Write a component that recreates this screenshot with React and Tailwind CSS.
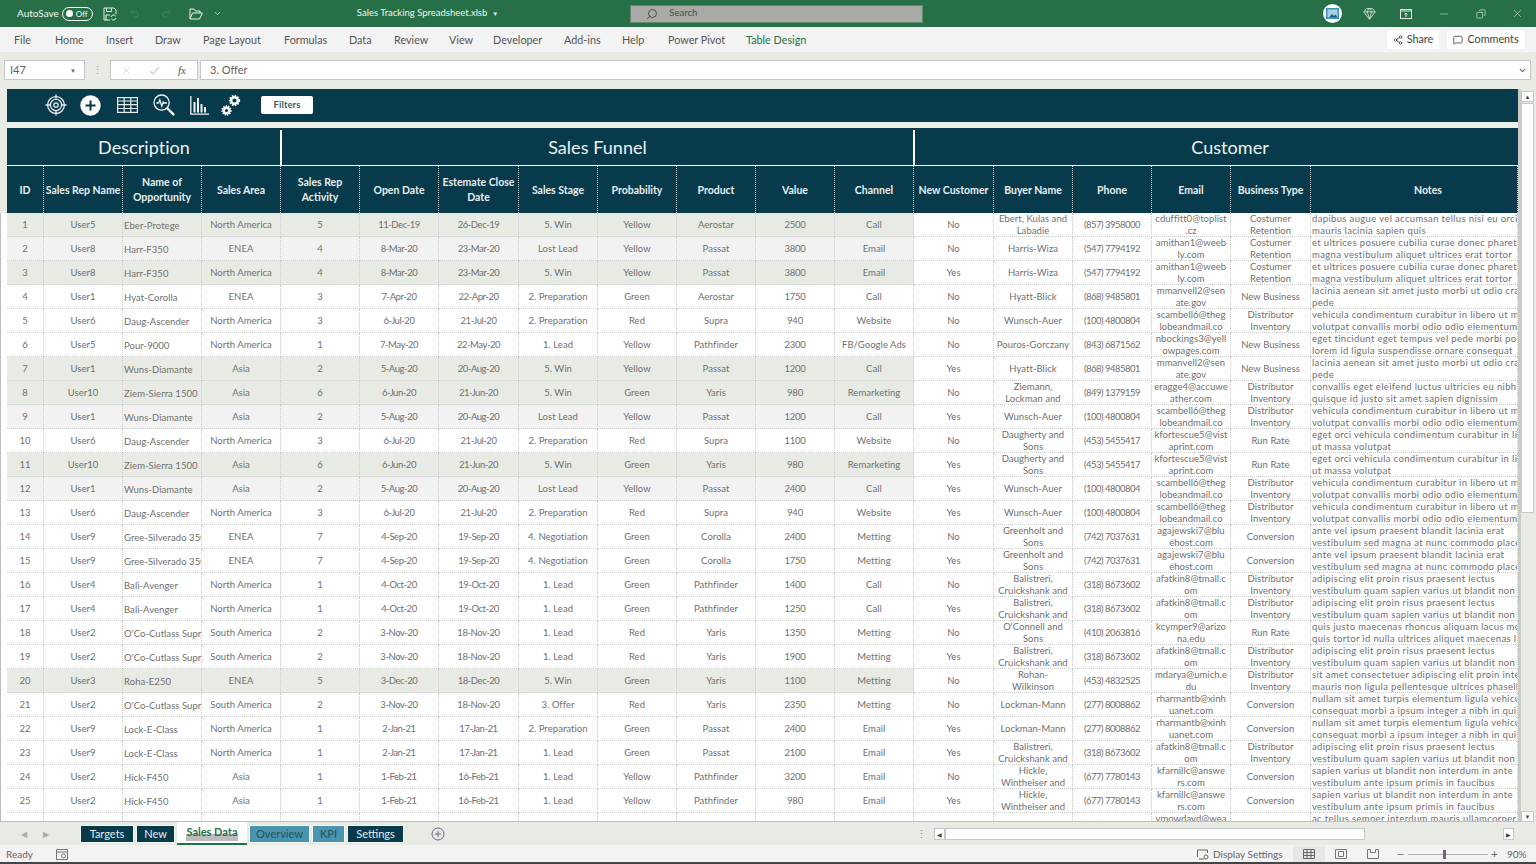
import React from 'react';
import { Search, Gem, Minus, X, Copy, ChevronDown, Share2, MessageSquare, Undo2, Redo2 } from 'lucide-react';

const COLS = 'grid grid-cols-[37px_79px_79px_79px_79px_79px_80px_79px_79px_79px_79px_79px_80px_79px_79px_79px_80px_207px]';

const HEADERS = [
  ['ID'], ['Sales Rep Name'], ['Name of', 'Opportunity'], ['Sales Area'], ['Sales Rep', 'Activity'], ['Open Date'],
  ['Estemate Close', 'Date'], ['Sales Stage'], ['Probability'], ['Product'], ['Value'], ['Channel'], ['New Customer'],
  ['Buyer Name'], ['Phone'], ['Email'], ['Business Type'], ['Notes'],
];

const MENU = [
  ['File', 'w-[41px]'], ['Home', 'w-[51px]'], ['Insert', 'w-[49px]'], ['Draw', 'w-[48px]'], ['Page Layout', 'w-[81px]'],
  ['Formulas', 'w-[65px]'], ['Data', 'w-[45px]'], ['Review', 'w-[55px]'], ['View', 'w-[44px]'], ['Developer', 'w-[71px]'],
  ['Add-ins', 'w-[58px]'], ['Help', 'w-[46px]'], ['Power Pivot', 'w-[78px]'],
];

// customer records, reused by the rows below
const C = {
  ebert: [['Ebert, Kulas and', 'Labadie'], '(857) 3958000', ['cduffitt0@toplist', '.cz'], ['Costumer', 'Retention'], ['dapibus augue vel accumsan tellus nisi eu orci', 'mauris lacinia sapien quis']],
  harris: [['Harris-Wiza'], '(547) 7794192', ['amithan1@weeb', 'ly.com'], ['Costumer', 'Retention'], ['et ultrices posuere cubilia curae donec pharetra', 'magna vestibulum aliquet ultrices erat tortor']],
  hyatt: [['Hyatt-Blick'], '(868) 9485801', ['mmanvell2@sen', 'ate.gov'], ['New Business'], ['lacinia aenean sit amet justo morbi ut odio cras', 'pede']],
  wunsch: [['Wunsch-Auer'], '(100) 4800804', ['scambell6@theg', 'lobeandmail.co'], ['Distributor', 'Inventory'], ['vehicula condimentum curabitur in libero ut massa', 'volutpat convallis morbi odio odio elementum']],
  pouros: [['Pouros-Gorczany'], '(843) 6871562', ['nbockings3@yell', 'owpages.com'], ['New Business'], ['eget tincidunt eget tempus vel pede morbi porttitor', 'lorem id ligula suspendisse ornare consequat']],
  ziemann: [['Ziemann,', 'Lockman and'], '(849) 1379159', ['eragge4@accuwe', 'ather.com'], ['Distributor', 'Inventory'], ['convallis eget eleifend luctus ultricies eu nibh', 'quisque id justo sit amet sapien dignissim']],
  daugherty: [['Daugherty and', 'Sons'], '(453) 5455417', ['kfortescue5@vist', 'aprint.com'], ['Run Rate'], ['eget orci vehicula condimentum curabitur in libero', 'ut massa volutpat']],
  greenholt: [['Greenholt and', 'Sons'], '(742) 7037631', ['agajewski7@blu', 'ehost.com'], ['Conversion'], ['ante vel ipsum praesent blandit lacinia erat', 'vestibulum sed magna at nunc commodo placerat']],
  balistreri: [['Balistreri,', 'Cruickshank and'], '(318) 8673602', ['afatkin8@tmall.c', 'om'], ['Distributor', 'Inventory'], ['adipiscing elit proin risus praesent lectus', 'vestibulum quam sapien varius ut blandit non']],
  oconnell: [["O'Connell and", 'Sons'], '(410) 2063816', ['kcymper9@arizo', 'na.edu'], ['Run Rate'], ['quis justo maecenas rhoncus aliquam lacus morbi', 'quis tortor id nulla ultrices aliquet maecenas leo']],
  rohan: [['Rohan-', 'Wilkinson'], '(453) 4832525', ['mdarya@umich.e', 'du'], ['Distributor', 'Inventory'], ['sit amet consectetuer adipiscing elit proin interdum', 'mauris non ligula pellentesque ultrices phasellus']],
  lockman: [['Lockman-Mann'], '(277) 8008862', ['rharmantb@xinh', 'uanet.com'], ['Conversion'], ['nullam sit amet turpis elementum ligula vehicula', 'consequat morbi a ipsum integer a nibh in quis']],
  hickle: [['Hickle,', 'Wintheiser and'], '(677) 7780143', ['kfarnillc@answe', 'rs.com'], ['Conversion'], ['sapien varius ut blandit non interdum in ante', 'vestibulum ante ipsum primis in faucibus']],
  kuhn: [['Kuhn-Bosco', ''], '(483) 6471042', ['vmowdayd@wea', 'ther.com'], ['Conversion'], ['ac tellus semper interdum mauris ullamcorper', 'purus sit amet nulla']],
};

const G = 'bg-[#e7ebe3]';
const S = 'bg-[#f2f2f2]';
const W = 'bg-white';

const ROWS = [
  [G, 'User5', 'Eber-Protege', 'North America', 5, '11-Dec-19', '26-Dec-19', '5. Win', 'Yellow', 'Aerostar', 2500, 'Call', 'No', C.ebert],
  [S, 'User8', 'Harr-F350', 'ENEA', 4, '8-Mar-20', '23-Mar-20', 'Lost Lead', 'Yellow', 'Passat', 3800, 'Email', 'No', C.harris],
  [G, 'User8', 'Harr-F350', 'North America', 4, '8-Mar-20', '23-Mar-20', '5. Win', 'Yellow', 'Passat', 3800, 'Email', 'Yes', C.harris],
  [W, 'User1', 'Hyat-Corolla', 'ENEA', 3, '7-Apr-20', '22-Apr-20', '2. Preparation', 'Green', 'Aerostar', 1750, 'Call', 'No', C.hyatt],
  [W, 'User6', 'Daug-Ascender', 'North America', 3, '6-Jul-20', '21-Jul-20', '2. Preparation', 'Red', 'Supra', 940, 'Website', 'No', C.wunsch],
  [W, 'User5', 'Pour-9000', 'North America', 1, '7-May-20', '22-May-20', '1. Lead', 'Yellow', 'Pathfinder', 2300, 'FB/Google Ads', 'No', C.pouros],
  [G, 'User1', 'Wuns-Diamante', 'Asia', 2, '5-Aug-20', '20-Aug-20', '5. Win', 'Yellow', 'Passat', 1200, 'Call', 'Yes', C.hyatt],
  [G, 'User10', 'Ziem-Sierra 1500', 'Asia', 6, '6-Jun-20', '21-Jun-20', '5. Win', 'Green', 'Yaris', 980, 'Remarketing', 'No', C.ziemann],
  [S, 'User1', 'Wuns-Diamante', 'Asia', 2, '5-Aug-20', '20-Aug-20', 'Lost Lead', 'Yellow', 'Passat', 1200, 'Call', 'Yes', C.wunsch],
  [W, 'User6', 'Daug-Ascender', 'North America', 3, '6-Jul-20', '21-Jul-20', '2. Preparation', 'Red', 'Supra', 1100, 'Website', 'No', C.daugherty],
  [G, 'User10', 'Ziem-Sierra 1500', 'Asia', 6, '6-Jun-20', '21-Jun-20', '5. Win', 'Green', 'Yaris', 980, 'Remarketing', 'Yes', C.daugherty],
  [S, 'User1', 'Wuns-Diamante', 'Asia', 2, '5-Aug-20', '20-Aug-20', 'Lost Lead', 'Yellow', 'Passat', 2400, 'Call', 'Yes', C.wunsch],
  [W, 'User6', 'Daug-Ascender', 'North America', 3, '6-Jul-20', '21-Jul-20', '2. Preparation', 'Red', 'Supra', 940, 'Website', 'Yes', C.wunsch],
  [W, 'User9', 'Gree-Silverado 3500', 'ENEA', 7, '4-Sep-20', '19-Sep-20', '4. Negotiation', 'Green', 'Corolla', 2400, 'Metting', 'No', C.greenholt],
  [W, 'User9', 'Gree-Silverado 3500', 'ENEA', 7, '4-Sep-20', '19-Sep-20', '4. Negotiation', 'Green', 'Corolla', 1750, 'Metting', 'Yes', C.greenholt],
  [W, 'User4', 'Bali-Avenger', 'North America', 1, '4-Oct-20', '19-Oct-20', '1. Lead', 'Green', 'Pathfinder', 1400, 'Call', 'No', C.balistreri],
  [W, 'User4', 'Bali-Avenger', 'North America', 1, '4-Oct-20', '19-Oct-20', '1. Lead', 'Green', 'Pathfinder', 1250, 'Call', 'Yes', C.balistreri],
  [W, 'User2', "O'Co-Cutlass Supreme", 'South America', 2, '3-Nov-20', '18-Nov-20', '1. Lead', 'Red', 'Yaris', 1350, 'Metting', 'No', C.oconnell],
  [W, 'User2', "O'Co-Cutlass Supreme", 'South America', 2, '3-Nov-20', '18-Nov-20', '1. Lead', 'Red', 'Yaris', 1900, 'Metting', 'Yes', C.balistreri],
  [G, 'User3', 'Roha-E250', 'ENEA', 5, '3-Dec-20', '18-Dec-20', '5. Win', 'Green', 'Yaris', 1100, 'Metting', 'No', C.rohan],
  [W, 'User2', "O'Co-Cutlass Supreme", 'South America', 2, '3-Nov-20', '18-Nov-20', '3. Offer', 'Red', 'Yaris', 2350, 'Metting', 'No', C.lockman],
  [W, 'User9', 'Lock-E-Class', 'North America', 1, '2-Jan-21', '17-Jan-21', '2. Preparation', 'Green', 'Passat', 2400, 'Email', 'Yes', C.lockman],
  [W, 'User9', 'Lock-E-Class', 'North America', 1, '2-Jan-21', '17-Jan-21', '1. Lead', 'Green', 'Passat', 2100, 'Email', 'Yes', C.balistreri],
  [W, 'User2', 'Hick-F450', 'Asia', 1, '1-Feb-21', '16-Feb-21', '1. Lead', 'Yellow', 'Pathfinder', 3200, 'Email', 'No', C.hickle],
  [W, 'User2', 'Hick-F450', 'Asia', 1, '1-Feb-21', '16-Feb-21', '1. Lead', 'Yellow', 'Pathfinder', 980, 'Email', 'Yes', C.hickle],
  [W, 'User9', 'Kuhn-Ranger', 'Asia', 1, '2-Mar-21', '17-Mar-21', '3. Offer', 'Yellow', 'Land Cruiser', 980, 'Call', 'No', C.kuhn],
];

function Cell({ bg = 'bg-white', left, className = '', children }) {
  const lines = Array.isArray(children) ? children : [children];
  return (
    <div className={`${bg} ${className} h-6 border-r border-b border-dotted border-[#cccccc] flex flex-col justify-center overflow-hidden whitespace-nowrap leading-[12px] pt-px ${left ? 'text-left pl-[1px]' : 'text-center'}`}>
      {lines.map((line, i) => <div key={i}>{line}</div>)}
    </div>
  );
}

function Row({ id, row }) {
  const [bg, user, opp, area, activity, open, close, stage, prob, product, value, channel, isNew, cust] = row;
  const [buyer, phone, email, biz, notes] = cust;
  return (
    <div className={COLS}>
      <Cell bg={bg}>{id}</Cell>
      <Cell bg={bg}>{user}</Cell>
      <Cell bg={bg} left><span className="relative top-px">{opp}</span></Cell>
      <Cell bg={bg}>{area}</Cell>
      <Cell bg={bg}>{activity}</Cell>
      <Cell bg={bg} className="tracking-[-0.45px]">{open}</Cell>
      <Cell bg={bg} className="tracking-[-0.45px]">{close}</Cell>
      <Cell bg={bg}>{stage}</Cell>
      <Cell bg={bg}>{prob}</Cell>
      <Cell bg={bg}>{product}</Cell>
      <Cell bg={bg} className="tracking-[-0.2px]">{value}</Cell>
      <Cell bg={bg}>{channel}</Cell>
      <Cell>{isNew}</Cell>
      <Cell>{buyer}</Cell>
      <Cell className="tracking-[-0.5px]">{phone}</Cell>
      <Cell>{email}</Cell>
      <Cell>{biz}</Cell>
      <Cell left className="tracking-[0.35px]">{notes}</Cell>
    </div>
  );
}

function TargetIcon() {
  return (
    <svg width="22" height="22" viewBox="0 0 22 22" fill="none" stroke="#e8eef0" strokeWidth="1.3">
      <circle cx="11" cy="11" r="8.4" />
      <circle cx="11" cy="11" r="5.6" />
      <circle cx="11" cy="11" r="2.2" />
      <path d="M11 0.5v5M11 16.5v5M0.5 11h5M16.5 11h5" />
    </svg>
  );
}

function PlusIcon() {
  return (
    <svg width="21" height="21" viewBox="0 0 21 21">
      <circle cx="10.5" cy="10.5" r="10.2" fill="#fff" />
      <path d="M10.5 5.5v10M5.5 10.5h10" stroke="#073b4c" strokeWidth="2" />
    </svg>
  );
}

function TableIcon() {
  return (
    <svg width="21" height="16" viewBox="0 0 21 16" fill="none" stroke="#e8eef0" strokeWidth="1.2">
      <rect x="0.6" y="0.6" width="19.8" height="14.8" />
      <path d="M0.6 4h19.8M0.6 7.7h19.8M0.6 11.5h19.8M7.2 0.6v14.8M13.8 0.6v14.8" />
    </svg>
  );
}

function PulseSearchIcon() {
  return (
    <svg width="22" height="22" viewBox="0 0 22 22" fill="none" stroke="#f0f4f5" strokeWidth="1.3">
      <circle cx="8.6" cy="8.6" r="7.6" />
      <path d="M3.4 9h2.2l1.2-3 2 6 1.4-4 .8 1h3" />
      <path d="M14.4 14.4l6 6" strokeWidth="2.4" strokeLinecap="round" />
    </svg>
  );
}

function BarsIcon() {
  return (
    <svg width="19" height="19" viewBox="0 0 19 19" fill="none" stroke="#f0f4f5">
      <path d="M0.8 0v18.2H19" strokeWidth="1.3" />
      <path d="M4.5 16.5V6M8 16.5V2M11.5 16.5V8M15 16.5V11" strokeWidth="2" />
    </svg>
  );
}

function Gear({ cx, cy, r }) {
  const tooth = (2 * Math.PI * r) / 16;
  return (
    <g fill="none" stroke="#fff">
      <circle cx={cx} cy={cy} r={r} strokeWidth="2.4" />
      <circle cx={cx} cy={cy} r={r + 1.4} strokeWidth="2" strokeDasharray={`${tooth * 1.15} ${tooth * 0.95}`} />
    </g>
  );
}

function GearsIcon() {
  return (
    <svg width="20" height="22" viewBox="0 0 20 22">
      <Gear cx={13.5} cy={6.5} r={3.3} />
      <Gear cx={5.5} cy={16.5} r={2.8} />
    </svg>
  );
}

function SaveIcon() {
  return (
    <svg width="14" height="14" viewBox="0 0 14 14" fill="none" stroke="#e4efe8" strokeWidth="1">
      <path d="M1 1h10l2 2v4M1 1v12h6" />
      <path d="M3.5 1v3.5h5V1M3 13V8h4" />
      <path d="M8 10a2.6 2.6 0 0 1 4.6-1M13 11a2.6 2.6 0 0 1-4.6 1" />
    </svg>
  );
}

function FolderIcon() {
  return (
    <svg width="14" height="12" viewBox="0 0 14 12" fill="none" stroke="#e4efe8" strokeWidth="1">
      <path d="M1 11V1h4l1.5 2H11v2M1 11h9.5L13.4 5H3.6z" />
    </svg>
  );
}

function AccountIcon() {
  return (
    <div className="w-[19px] h-[19px] rounded-full bg-white flex items-center justify-center">
      <svg width="13" height="11" viewBox="0 0 13 11">
        <rect x="0" y="0" width="13" height="11" fill="#3e8fb5" />
        <rect x="1.5" y="1.5" width="10" height="8" fill="#a7d0e4" />
        <path d="M3 9.5l3-3.5 2 2 1.5-1.5 2 3z" fill="#17608a" />
      </svg>
    </div>
  );
}

function RibbonIcon() {
  return (
    <svg width="12" height="10" viewBox="0 0 12 10" fill="none" stroke="#e4efe8">
      <rect x="0.5" y="0.5" width="11" height="9" />
      <path d="M0.5 2h11" />
      <path d="M6 8V4M4.5 5.5L6 4l1.5 1.5" />
    </svg>
  );
}

function SheetTab({ className, children }) {
  return <div className={`h-[18px] flex items-center justify-center border border-[#f4f6f2] text-[11px] ${className}`}>{children}</div>;
}

function ViewIcons() {
  return (
    <div className="flex items-center h-full">
      <div className="w-8 h-full bg-[#e6e8e3] flex items-center justify-center">
        <svg width="12" height="10" viewBox="0 0 12 10" fill="none" stroke="#666"><path d="M.5.5h11v9H.5zM.5 3.5h11M.5 6.5h11M4 .5v9M8 .5v9" /></svg>
      </div>
      <div className="w-8 h-full flex items-center justify-center">
        <svg width="12" height="10" viewBox="0 0 12 10" fill="none" stroke="#777"><path d="M.5.5h11v9H.5zM3.5 2.5h5v5h-5z" /></svg>
      </div>
      <div className="w-8 h-full flex items-center justify-center">
        <svg width="12" height="10" viewBox="0 0 12 10" fill="none" stroke="#777"><path d="M.5.5h3v3h5v-3h3v9H.5z" /></svg>
      </div>
    </div>
  );
}

export default function App() {
  return (
    <div className="w-[1536px] h-[864px] overflow-hidden flex flex-col bg-[#e7ebe3] font-['Lato','Liberation_Sans',sans-serif] text-[#5f5f5f]">
      {/* title bar */}
      <div className="h-[27px] shrink-0 bg-[#277047] flex items-center text-[#eef5f0] text-[10px]">
        <span className="ml-[17px]">AutoSave</span>
        <div className="ml-[3px] w-[31px] h-[14px] rounded-full border border-white flex items-center pl-[3px] gap-[3px] text-[8px]">
          <span className="w-[7px] h-[7px] rounded-full bg-white" />Off
        </div>
        <span className="ml-[10px]"><SaveIcon /></span>
        <Undo2 className="ml-[12px] w-[11px] h-[11px] opacity-20" strokeWidth={1.5} />
        <Redo2 className="ml-[21px] w-[11px] h-[11px] opacity-20" strokeWidth={1.5} />
        <span className="ml-[17px]"><FolderIcon /></span>
        <ChevronDown className="ml-[10px] w-[9px] h-[9px]" strokeWidth={2} />
        <span className="ml-[135px] text-[9.5px]">Sales Tracking Spreadsheet.xlsb</span>
        <span className="ml-[5px] text-[6px]">▼</span>
        <div className="ml-[132px] w-[293px] h-[18px] bg-[#a9a9a5] border border-[#5f8c70] flex items-center text-[#40504a] text-[9.5px]">
          <Search className="ml-[15px] w-[12px] h-[12px] -scale-x-100" />
          <span className="ml-[11px]">Search</span>
        </div>
        <div className="ml-auto flex items-center h-full">
          <AccountIcon />
          <Gem className="ml-[21px] w-[13px] h-[13px]" strokeWidth={1.4} />
          <span className="ml-[24px]"><RibbonIcon /></span>
          <Minus className="ml-[26px] w-[12px] h-[12px]" strokeWidth={1} />
          <Copy className="ml-[26px] w-[10px] h-[10px] -scale-x-100" strokeWidth={1.4} />
          <X className="ml-[25px] mr-[12px] w-[13px] h-[13px]" strokeWidth={1} />
        </div>
      </div>

      {/* ribbon tabs */}
      <div className="h-[25px] shrink-0 bg-[#f3f3f3] flex items-center text-[10.8px] text-[#555] pl-[14px]">
        {MENU.map(([label, w]) => <span key={label} className={`${w} pt-[2px]`}>{label}</span>)}
        <span className="text-[#217346] pt-[2px]">Table Design</span>
        <div className="ml-auto flex items-center gap-2 mr-[11px]">
          <div className="h-[18px] w-[52px] bg-white flex items-center justify-center gap-1 text-[#444]">
            <Share2 className="w-[10px] h-[10px]" />Share
          </div>
          <div className="h-[18px] w-[78px] bg-white flex items-center justify-center gap-1 text-[#444]">
            <MessageSquare className="w-[10px] h-[10px]" />Comments
          </div>
        </div>
      </div>

      {/* formula bar */}
      <div className="h-[37px] shrink-0 flex items-center text-[11px] pl-[4px] pr-[5px] pb-[1px]">
        <div className="w-[81px] h-[20px] bg-white border border-[#c6c6c6] flex items-center justify-between px-[5px]">
          I47<span className="text-[6px] text-[#666] mr-[3px]">▼</span>
        </div>
        <span className="w-[25px] text-center text-[#999]">⋮</span>
        <div className="w-[88px] h-[20px] bg-white border border-[#c6c6c6] flex items-center text-[#aaa]">
          <X className="ml-[10px] w-[11px] h-[11px]" strokeWidth={1} />
          <svg className="ml-[17px]" width="11" height="9" viewBox="0 0 11 9" fill="none" stroke="#d4d4d4" strokeWidth="1.4"><path d="M1 5l3 3 6-7" /></svg>
          <span className="ml-[18px] italic font-['Liberation_Serif',serif] text-[#555]">fx</span>
        </div>
        <div className="ml-[2px] flex-1 h-[20px] bg-white border border-[#c6c6c6] flex items-center pl-[9px] pr-[3px] justify-between">
          3. Offer
          <ChevronDown className="w-[9px] h-[9px] text-[#6a6a8a]" strokeWidth={3} />
        </div>
      </div>

      {/* sheet + vertical scrollbar */}
      <div className="flex-1 min-h-0 flex">
        <div className="w-[1518px] h-full overflow-hidden border-b border-[#bdbdbd] text-[9.5px] tracking-[0.05px] text-[#707070]">
          <div className="pl-[7px]">
            <div className="h-[33px] pb-px bg-[#073b4c] flex items-center">
              <div className="ml-[38px]"><TargetIcon /></div>
              <div className="ml-[13px]"><PlusIcon /></div>
              <div className="ml-[16px]"><TableIcon /></div>
              <div className="ml-[15px]"><PulseSearchIcon /></div>
              <div className="ml-[15px]"><BarsIcon /></div>
              <div className="ml-[12px]"><GearsIcon /></div>
              <div className="ml-[20px] w-[52px] h-[18px] bg-white rounded-[2px] flex items-center justify-center text-[#3f5a64] font-bold text-[9.5px]">Filters</div>
            </div>
            <div className="h-[6px] bg-[#eceeea]" />
            <div className="grid grid-cols-[275px_633px_603px] h-[38px] pt-[2px] bg-[#073b4c] text-[#eef3f4] text-[18px] border-b border-white">
              <div className="flex items-center justify-center pl-px border-r-2 border-white">Description</div>
              <div className="flex items-center justify-center border-r-2 border-white">Sales Funnel</div>
              <div className="flex items-center justify-center pl-[27px]">Customer</div>
            </div>
            <div className={`${COLS} h-[47px] bg-[#073b4c] text-[#e8eef0] font-bold text-[10.5px] tracking-normal leading-[15px]`}>
              {HEADERS.map((lines) => (
                <div
                  key={lines[0]}
                  className={`border-r border-dotted border-[#c8d4d8] flex flex-col items-center justify-center whitespace-nowrap overflow-hidden ${lines.length === 1 ? 'pt-[2px]' : ''} ${lines[0] === 'Notes' ? 'pl-[28px]' : ''}`}
                >
                  {lines.map((l) => <div key={l}>{l}</div>)}
                </div>
              ))}
            </div>
          </div>
          <div className="pl-[6px] bg-white border-l border-[#bdbdbd]">
            {ROWS.map((row, i) => <Row key={i} id={i + 1} row={row} />)}
          </div>
        </div>
        <div className="w-[3px] h-full bg-[#c9cbc7]" />
        <div className="w-[13px] h-full flex flex-col">
          <div className="h-[2px]" />
          <div className="h-[11px] bg-white border border-[#c8c8c8] flex items-center justify-center text-[6px] text-[#444]">▲</div>
          <div className="h-[410px] mt-px bg-white border border-[#c8c8c8]" />
          <div className="flex-1" />
          <div className="h-[11px] bg-white border border-[#c8c8c8] flex items-center justify-center text-[6px] text-[#444]">▼</div>
        </div>
      </div>

      {/* sheet tabs */}
      <div className="h-[23px] shrink-0 pt-px flex items-center text-[#aaa] text-[8px]">
        <span className="ml-[21px]">◀</span>
        <span className="ml-[16px]">▶</span>
        <div className="ml-[31px] flex items-center gap-[2px]">
          <SheetTab className="w-[54px] bg-[#073b4c] text-[#e8eef0]">Targets</SheetTab>
          <SheetTab className="w-[39px] bg-[#073b4c] text-[#e8eef0]">New</SheetTab>
          <div className="w-[70px] h-[23px] -mt-[1px] bg-white border-b-2 border-[#217346] flex items-center justify-center text-[#217346] font-bold text-[11px]">
            <span className="bg-[linear-gradient(transparent_60%,#bbb_60%)]">Sales Data</span>
          </div>
          <SheetTab className="w-[61px] bg-[#4a94ad] text-[#1d5566]">Overview</SheetTab>
          <SheetTab className="w-[33px] bg-[#4a94ad] text-[#1d5566]">KPI</SheetTab>
          <SheetTab className="w-[57px] bg-[#073b4c] text-[#e8eef0]">Settings</SheetTab>
        </div>
        <svg className="ml-[27px]" width="14" height="14" viewBox="0 0 14 14" fill="none" stroke="#6a6a8a"><circle cx="7" cy="7" r="6" /><path d="M7 4v6M4 7h6" /></svg>
        <span className="ml-[469px] w-[14px] text-center text-[11px] text-[#888]">⋮</span>
        <div className="ml-[6px] w-[11px] h-[12px] bg-white border border-[#c8c8c8] flex items-center justify-center text-[6px] text-[#444]">◀</div>
        <div className="w-[420px] h-[12px] bg-white border border-[#c8c8c8]" />
        <div className="w-[138px]" />
        <div className="w-[11px] h-[12px] bg-white border border-[#c8c8c8] flex items-center justify-center text-[6px] text-[#444]">▶</div>
      </div>

      {/* status bar */}
      <div className="h-[17px] shrink-0 bg-[#f3f3f3] flex items-center text-[10px] text-[#666] pl-[6px] pr-[11px] pt-px whitespace-nowrap">
        <span>Ready</span>
        <svg className="ml-[23px]" width="12" height="11" viewBox="0 0 12 11" fill="none" stroke="#777"><path d="M.5.5h11v10H.5zM.5 3h11" /><circle cx="7.5" cy="7" r="2" /></svg>
        <div className="ml-auto flex items-center h-full">
          <svg width="12" height="11" viewBox="0 0 12 11" fill="none" stroke="#666"><path d="M.5 8V1h10v3M2 10h5" /><circle cx="9" cy="8" r="2" /></svg>
          <span className="ml-[4px] w-[65px]">Display Settings</span>
          <div className="ml-[15px] h-full"><ViewIcons /></div>
          <Minus className="ml-[7px] w-[9px] h-[9px]" />
          <div className="ml-[3px] w-[80px] h-px bg-[#b5b5b5] relative">
            <div className="absolute left-[35px] -top-[4px] w-[3px] h-[9px] bg-[#7a5c86]" />
          </div>
          <span className="ml-[3px] w-[10px] text-[12px] leading-none">+</span>
          <span className="ml-[6px] w-[18px]">90%</span>
        </div>
      </div>
      <div className="h-[2px] shrink-0 bg-[#444]" />
    </div>
  );
}
